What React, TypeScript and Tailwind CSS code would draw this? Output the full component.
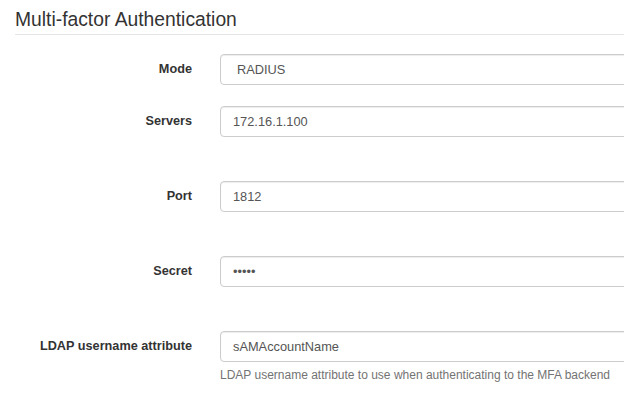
const rows = [
  { label: 'Mode', value: 'RADIUS', select: true, mt: 'mt-[19px]' },
  { label: 'Servers', value: '172.16.1.100', mt: 'mt-[21px]' },
  { label: 'Port', value: '1812', mt: 'mt-[44px]' },
  { label: 'Secret', value: '•••••', mt: 'mt-[44px]', secret: true },
  { label: 'LDAP username attribute', value: 'sAMAccountName', mt: 'mt-[44px]', help: 'LDAP username attribute to use when authenticating to the MFA backend' },
]

const App = () => {
  return (
    <div className="w-[624px] h-[399px] overflow-hidden bg-white font-['Liberation_Sans',Arial,sans-serif]">
      <div className="pl-[15px] pt-[8px]">
        <h3 className="text-[19.3px] leading-[24px] text-[#333] pb-[2px] border-b border-[#e5e5e5]">
          Multi-factor Authentication
        </h3>
      </div>

      {rows.map((r) => (
        <div key={r.label} className={`flex items-start ${r.mt}`}>
          <label className="w-[192px] shrink-0 text-right text-[12.7px] font-bold text-[#333] leading-[31px]">
            {r.label}
          </label>
          <div className="ml-[28px]">
            <div
              className={`w-[500px] h-[31px] border border-[#ccc] rounded-[4px] shadow-[inset_0_1px_1px_rgba(0,0,0,0.075)] flex items-center text-[12.8px] text-[#555] ${r.select ? 'pl-[16px]' : 'pl-[12px]'} ${r.secret ? 'text-[9px]' : ''}`}
            >
              {r.value}
            </div>
            {r.help && (
              <p className="mt-[5px] text-[12px] text-[#737373] leading-[16px]">{r.help}</p>
            )}
          </div>
        </div>
      ))}
    </div>
  )
}

export default App
